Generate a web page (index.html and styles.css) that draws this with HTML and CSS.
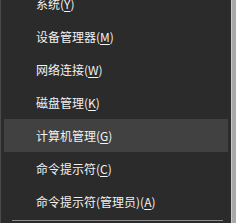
FILE: index.html
```html
<!DOCTYPE html>
<html lang="zh-CN">
<head>
    <meta charset="UTF-8">
    <title>快捷菜单</title>
    <link rel="stylesheet" href="styles.css">
</head>
<body>
<div class="wrap">
    <div class="menu">
        <ul class="list">
            <li>系统(<u>Y</u>)</li>
            <li>设备管理器(<u>M</u>)</li>
            <li>网络连接(<u>W</u>)</li>
            <li>磁盘管理(<u>K</u>)</li>
            <li class="cur">计算机管理(<u>G</u>)</li>
            <li>命令提示符(<u>C</u>)</li>
            <li>命令提示符(管理员)(<u>A</u>)</li>
        </ul>
        <div class="line"></div>
    </div>
    <div class="side"></div>
</div>
</body>
</html>
```

FILE: styles.css
```css
/*reset*/
body,ul,li{margin:0;padding:0}
ul{list-style:none}
body {
    width: 236px;
    height: 223px;
    overflow: hidden;
    background: #2b2b2b;
    font: 12px "Microsoft YaHei", "Noto Sans CJK SC", sans-serif;
    color: #f2f2f2;
}
.wrap {
    display: flex;
    height: 223px;
}
.menu {
    flex: 1;
    border-left: 1px solid #4a4a4a;
    padding: 0 3px 0 3px;
    overflow: hidden;
}
.list {
    margin-top: -13px;
}
.list li {
    height: 33px;
    line-height: 33px;
    padding-left: 32px;
    white-space: nowrap;
}
.list li u {
    text-underline-offset: 2px;
}
.list .cur {
    background: #414141;
}
.line {
    height: 1px;
    margin: 2px 5px 0 8px;
    background: #8c8c8c;
}
.side {
    width: 4px;
    background: #a8a8a8;
    border-left: 1px solid #c8c8c8;
}
```
